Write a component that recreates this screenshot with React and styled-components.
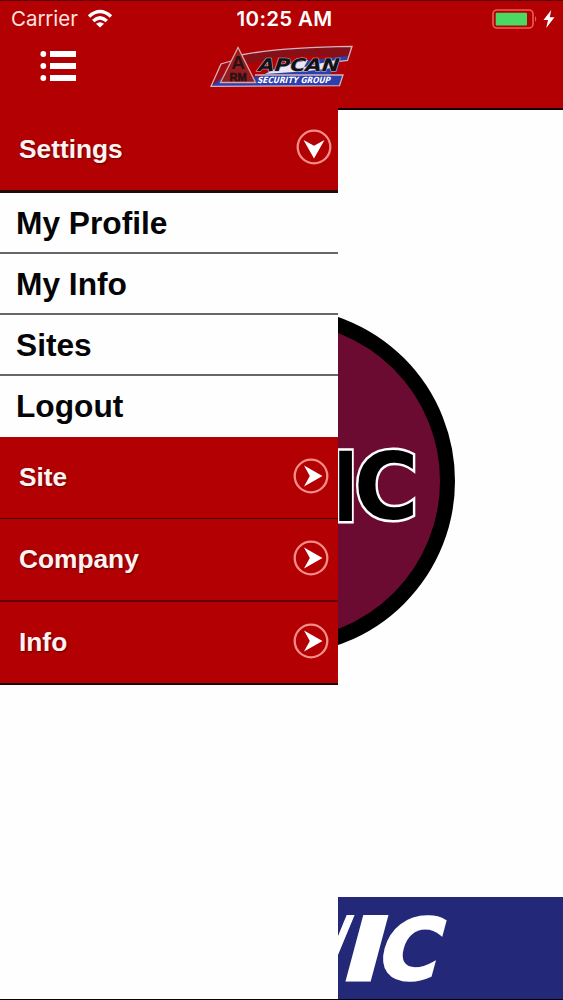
import React from "react";
import styled, { createGlobalStyle } from "styled-components";

const GlobalStyle = createGlobalStyle`
  * {
    box-sizing: border-box;
  }

  body {
    margin: 0;
    background: #fff;
  }
`;
const Screen = styled.div`
  width: 563px;
  height: 1000px;
  display: flex;
  flex-flow: column nowrap;
  overflow: hidden;
  border-top: 1px solid #5c0003;
  border-bottom: 1px solid #05050f;
  background: #fefefe;
  font-family: "Liberation Sans", Arial, sans-serif;
`;
const Header = styled.header`
  height: 107px;
  flex: none;
  background: #b30003;
`;
const StatusBar = styled.div`
  height: 36px;
  padding: 0 8px 0 11px;
  display: grid;
  grid-template-columns: 1fr auto 1fr;
  align-items: center;
  color: #fff;
  font-family: Inter, sans-serif;
  font-size: 20.5px;
  line-height: 36px;
`;
const Carrier = styled.div`
  display: flex;
  align-items: center;
  gap: 9px;
  color: #ffe3e0;
  letter-spacing: -0.05px;
`;
const Time = styled.div`
  padding-left: 3px;
  font-weight: 600;
  font-size: 20.5px;
  letter-spacing: 0.3px;
`;
const Power = styled.div`
  display: flex;
  align-items: center;
  justify-content: flex-end;
  gap: 5px;
`;
const NavBar = styled.div`
  height: 71px;
  padding: 7px 0 0 40px;
  display: flex;
  align-items: flex-start;
`;
const MenuButton = styled.button`
  width: 36px;
  height: 32px;
  margin: 6px 134px 0 0;
  padding: 0;
  border: 0;
  background: none;
`;
const Content = styled.div`
  flex: 1;
  display: flex;
  flex-flow: row nowrap;
  min-height: 0;
`;
const Drawer = styled.nav`
  width: 338px;
  flex: none;
`;
const Section = styled.div`
  height: ${(props) => props.$height}px;
  padding: ${(props) => (props.$open ? "0 6px 0 19px" : "0 9px 2px 19px")};
  display: flex;
  align-items: center;
  justify-content: space-between;
  border-bottom: ${(props) => props.$line};
  background: #b30003;
  color: #fff3f1;
  font-weight: 700;
  font-size: 26.3px;
  line-height: 30px;
  text-shadow: 1px 1px 2px rgba(60, 0, 0, 0.7);
`;
const ArrowIcon = styled.svg`
  margin-bottom: ${(props) => (props.$down ? 4 : 1)}px;
`;
const Item = styled.div`
  height: 61px;
  padding-left: 16px;
  border-bottom: ${(props) => (props.$last ? "0" : "2px solid #67676b")};
  color: #050507;
  font-weight: 700;
  font-size: 31.7px;
  line-height: 60px;
`;
const Main = styled.main`
  width: 225px;
  display: flex;
  flex-flow: column nowrap;
  justify-content: space-between;
  border-top: 2px solid #190002;
`;
const Emblem = styled.svg`
  display: block;
  margin-top: 190px;
`;
const Banner = styled.svg`
  display: block;
  background: #232878;
`;

const items = ["My Profile", "My Info", "Sites", "Logout"];
const sections = [
  { title: "Site", height: 82, line: "1px solid #3e0002" },
  { title: "Company", height: 83, line: "2px solid #5e0002" },
  { title: "Info", height: 83, line: "2px solid #1d0305" },
];

const Arrow = ({ down }) => (
  <ArrowIcon $down={down} width="36" height="36" viewBox="0 0 36 36">
    <circle cx="18" cy="18" r="16.3" fill="none" stroke="#f58c88" strokeWidth="2.3" />
    <path
      d="M11 7.5L29.5 18L11 28.5L16.8 18Z"
      fill="#fff"
      transform={down ? "rotate(90 18 18)" : undefined}
    />
  </ArrowIcon>
);

const Wifi = () => (
  <svg width="26" height="20" viewBox="0 0 26 20" fill="none" stroke="#fff" strokeWidth="3.4">
    <path d="M2 7.5Q13 -2.5 24 7.5" />
    <path d="M6.2 12Q13 5.8 19.8 12" />
    <path d="M13 18.5L9 14.7Q13 11.6 17 14.7Z" fill="#fff" stroke="none" />
  </svg>
);

const Battery = () => (
  <svg width="46" height="20" viewBox="0 0 46 20">
    <rect x="1" y="1" width="40" height="18" rx="4" fill="none" stroke="#ee5c5a" strokeWidth="1.6" />
    <rect x="3.7" y="3.7" width="31.3" height="12.8" rx="1" fill="#4bd964" />
    <path d="M43 7Q45.5 10 43 13Z" fill="#ee5c5a" />
  </svg>
);

const Bolt = () => (
  <svg width="12" height="18" viewBox="0 0 12 18">
    <path d="M8.2 0L0.5 10H5L3.2 18L11.5 7.2H6.8Z" fill="#fff" />
  </svg>
);

const Logo = () => (
  <svg width="144" height="44" viewBox="0 0 144 44">
    <path d="M30 11Q72 3 142 2.3L137.5 16.5L128 14Q95 7 37 20Z" fill="#860f18" />
    <path d="M1 42.3L10 28L50 33Q64 22 92 17L138 12L136 17L129.5 17.5L126 31H133L129.5 41.7Z" fill="#2c3fae" />
    <path d="M55 30Q72 21 98 16L94 23L126 16L122 24L98 27Z" fill="#ece7f3" />
    <path d="M1 42.3L10.5 20L23 16L14 32Z" fill="#a30b12" />
    <path d="M122 28H127L126 31H120Z" fill="#b30003" />
    <path
      d="M31 11Q72 3 142 2.3L137.5 16.5L129.5 17.3M45 31H133L129.5 41.7L1 42.3L11 20L21 17"
      fill="none"
      stroke="#d5b4bf"
      strokeWidth="1.3"
    />
    <path d="M28 3.5L10.5 38.5H45.5Z" fill="#951c1e" stroke="#d8a5a5" strokeWidth="1.3" />
    <g fontFamily="Liberation Sans" fontWeight="700" fill="#2a1214" textAnchor="middle">
      <text x="28" y="25" fontSize="19">A</text>
      <text x="28" y="36.5" fontSize="11" stroke="#2a1214" strokeWidth="0.6">RM</text>
    </g>
    <g fontFamily="DejaVu Sans" fontWeight="700">
      <text
        transform="translate(46.5 26.5) skewX(-18)"
        fontSize="17.5"
        fill="#121216"
        stroke="#cbbdc6"
        strokeWidth="1"
        paintOrder="stroke"
        textLength="81"
        lengthAdjust="spacingAndGlyphs"
      >
        APCAN
      </text>
      <text
        transform="translate(47 39.3) skewX(-15)"
        fontSize="8.6"
        fill="#fff"
        textLength="73"
        lengthAdjust="spacingAndGlyphs"
      >
        SECURITY GROUP
      </text>
    </g>
  </svg>
);

const App = () => {
  return (
    <>
      <GlobalStyle />
      <Screen>
        <Header>
          <StatusBar>
            <Carrier>
              Carrier <Wifi />
            </Carrier>
            <Time>10:25 AM</Time>
            <Power>
              <Battery />
              <Bolt />
            </Power>
          </StatusBar>
          <NavBar>
            <MenuButton aria-label="Menu">
              <svg width="36" height="32" viewBox="0 0 36 32" fill="#fff">
                {[4, 16, 28].map((y) => (
                  <g key={y}>
                    <circle cx="3.3" cy={y} r="2.9" />
                    <rect x="10" y={y - 3} width="26" height="6" />
                  </g>
                ))}
              </svg>
            </MenuButton>
            <Logo />
          </NavBar>
        </Header>
        <Content>
          <Drawer>
            <Section $open $height={85} $line="3px solid #24090b">
              Settings
              <Arrow down />
            </Section>
            {items.map((item, index) => (
              <Item key={item} $last={index === items.length - 1}>
                {item}
              </Item>
            ))}
            {sections.map((section) => (
              <Section key={section.title} $height={section.height} $line={section.line}>
                {section.title}
                <Arrow />
              </Section>
            ))}
          </Drawer>
          <Main>
            <Emblem width="225" height="360" viewBox="0 0 225 360">
              <circle cx="-56.5" cy="181" r="166" fill="#6b0b31" stroke="#000" strokeWidth="15" />
              <g
                fontFamily="DejaVu Sans"
                fontWeight="700"
                fill="#000"
                stroke="#fff"
                strokeWidth="5"
                paintOrder="stroke"
              >
                <text x="-5" y="220.5" fontSize="95.5" textLength="25.2" lengthAdjust="spacingAndGlyphs">I</text>
                <text x="16" y="219" fontSize="93" textLength="64.5" lengthAdjust="spacingAndGlyphs">C</text>
              </g>
            </Emblem>
            <Banner width="225" height="102" viewBox="0 0 225 102">
              <g
                transform="translate(0 84) skewX(-15)"
                fontFamily="DejaVu Sans"
                fontWeight="700"
                fill="#fff"
                stroke="#fff"
                strokeWidth="3"
              >
                <text x="-29" y="-1.5" fontSize="87" textLength="27" lengthAdjust="spacingAndGlyphs">V</text>
                <text x="-1" y="-1.5" fontSize="87" textLength="42" lengthAdjust="spacingAndGlyphs">I</text>
                <text x="35" y="-2.5" fontSize="84" textLength="61" lengthAdjust="spacingAndGlyphs">C</text>
              </g>
            </Banner>
          </Main>
        </Content>
      </Screen>
    </>
  );
};

export default App;
